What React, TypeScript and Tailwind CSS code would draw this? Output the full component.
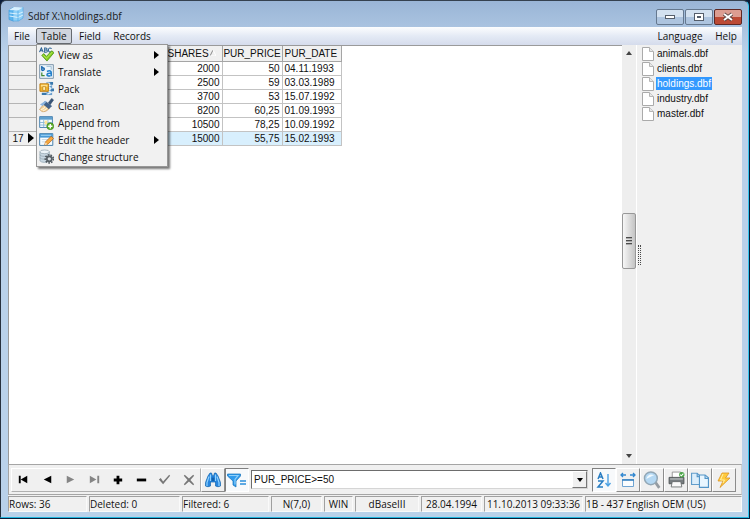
import type { ReactNode } from "react";
import clsx from "clsx";

const rows = [
  ["2000", "50", "04.11.1993"],
  ["2500", "59", "03.03.1989"],
  ["3700", "53", "15.07.1992"],
  ["8200", "60,25", "01.09.1993"],
  ["10500", "78,25", "10.09.1992"],
  ["15000", "55,75", "15.02.1993"],
];

const files = ["animals.dbf", "clients.dbf", "holdings.dbf", "industry.dbf", "master.dbf"];

const Svg = ({ className, children }: { className?: string; children: ReactNode }) => (
  <svg viewBox="0 0 16 16" className={clsx("shrink-0", className ?? "size-[15px]")} fill="none" aria-hidden="true">
    {children}
  </svg>
);

const DatabaseIcon = () => (
  <Svg className="size-4">
    <path d="M1 4l4-2.5 5 .8v11L5 15l-4-1.500z" fill="#5bb4ee" stroke="#3b97d8" strokeWidth=".6" />
    <path d="M5 4.500l5-2.200 5-1V12l-4.500 3L5 15z" fill="#8fd0f7" stroke="#4aa3e0" strokeWidth=".6" />
    <path d="M1 4l5-3 9 .5-5 3z" fill="#d9f1ff" />
    <path d="M1.500 7L10 8l5-2M1.500 10l8.500 1.500L15 9" stroke="#e3f5ff" strokeWidth=".9" />
    <path d="M10 4.500V15" stroke="#3d9ee0" strokeWidth=".6" />
  </Svg>
);

const ViewAsIcon = () => (
  <Svg>
    <path d="M.5 5.500L2.500 1l2 4.500M1.200 4h2.600M6 1v4.500h1.500c2 0 2-2.300 0-2.300H6h1.300C9 3.200 9 1 7.300 1zM13.500 1.800c-2-1.500-3.500-.5-3.500 1.400 0 2 2 3 3.500 1.500" stroke="#2d6495" strokeWidth="1.100" />
    <path d="M3 9l2-2 3 3 5.500-6L16 6l-7.500 9z" fill="#85ce20" stroke="#438b0c" strokeWidth=".8" />
    <path d="M4.500 9L8 12l6-6.500" stroke="#c6ef6e" strokeWidth=".8" />
  </Svg>
);

const TranslateIcon = () => (
  <Svg>
    <path d="M.7.700h14.600v14.600H.7z" fill="#edf5fb" stroke="#7890a6" />
    <path d="M3 2v5M3 4.500c3-1.500 4 2.500 0 2.500" stroke="#1565ae" strokeWidth="1.500" />
    <path d="M8.500 8c3-1.500 4.500-.5 4.500 1v4M13 10c-6-1-5.500 4-1 2.500" stroke="#227fcb" strokeWidth="1.700" />
    <path d="M3 9v3.500h3" stroke="#3e8931" strokeWidth="1.300" />
    <path d="M8 2.500h5V6" stroke="#97b9d1" />
  </Svg>
);

const PackIcon = () => (
  <Svg>
    <path d="M8 1h6v14H8z" fill="#6d9fcc" />
    <path d="M9 2l4 2-4 2 4 2-4 2 4 2-4 2" stroke="#e5f2fa" strokeWidth="1.500" />
    <path d="M12 1h3v3h-3zM13 8h3v3h-3zM3 12.500h5V15H3z" fill="#3978ac" />
    <path d="M1 3h9v8H1z" fill="#f1b52f" stroke="#bd7d12" />
    <path d="M2 4h7v2H2z" fill="#ffe18b" />
    <path d="M4 6h3v4H4z" fill="#fff0af" stroke="#b47715" strokeWidth=".7" />
  </Svg>
);

const CleanIcon = () => (
  <Svg>
    <path d="M10 5l3.500-4.500 2 1.500L12 7z" fill="#375478" stroke="#243b59" strokeWidth=".6" />
    <path d="M5 6l6 5c-2 3-5 4-8 3.500L.5 12C3 10 3.500 8 5 6z" fill="#f4d199" stroke="#bb8848" strokeWidth=".6" />
    <path d="M2 12.500c3-.5 4-2 5-4M4 14c3-1 4-2 5-4" stroke="#fff4d7" strokeWidth="1.100" />
    <path d="M6.500 3.500l7 5-3 3-6-5z" fill="#41638c" stroke="#2d4d74" strokeWidth=".6" />
    <path d="M1 7l6-4 1 1-4 4.500z" fill="#8db5df" />
  </Svg>
);

const AppendIcon = () => (
  <Svg>
    <path d="M.7 1.700h13.600v11.600H.7z" fill="#f3faff" stroke="#437ead" />
    <path d="M1 2h13v3H1z" fill="#5e9fce" />
    <path d="M5 5v8M9.500 5v8M1 8h13M1 10.700h13" stroke="#8cb9d8" />
    <path d="M6 6h3v4H6z" fill="#ffe496" />
    <circle cx="12" cy="12" r="3.700" fill="#5baf28" stroke="#397a16" strokeWidth=".6" />
    <path d="M12 9.700v4.600M9.700 12h4.600" stroke="#fff" strokeWidth="1.500" />
  </Svg>
);

const EditHeaderIcon = () => (
  <Svg>
    <path d="M.7 1.700h14v12.600H.7z" fill="#f6fbff" stroke="#417ba8" />
    <path d="M1 2h13.500v4H1z" fill="#4a99d5" />
    <path d="M2 3.500h11" stroke="#a9d9f7" />
    <path d="M3 8h7M3 10.500h4" stroke="#c9d8e2" />
    <path d="M6 14l1-3.500 6-6 2.500 2.500-6 6z" fill="#f7a83d" stroke="#a65817" strokeWidth=".7" />
    <path d="M6 14l1-3 2 2z" fill="#f9e1b8" />
  </Svg>
);

const StructureIcon = () => (
  <Svg>
    <path d="M1 3v9c0 3 10 3 10 0V3z" fill="#c8d7e2" stroke="#879caa" strokeWidth=".7" />
    <ellipse cx="6" cy="3" rx="5" ry="2" fill="#edf5fa" stroke="#8b9da9" strokeWidth=".7" />
    <path d="M1 6c0 2.500 10 2.500 10 0M1 9c0 2.500 10 2.500 10 0" stroke="#8b9da9" strokeWidth=".7" />
    <circle cx="11" cy="10.500" r="4.300" stroke="#4c545b" strokeWidth="1.700" strokeDasharray="1.700 1.300" />
    <circle cx="11" cy="10.500" r="2.700" fill="#d9dfe3" stroke="#555e65" strokeWidth="1.800" />
  </Svg>
);

const menuItems = [
  { label: "View as", icon: <ViewAsIcon />, sub: true },
  { label: "Translate", icon: <TranslateIcon />, sub: true },
  { label: "Pack", icon: <PackIcon /> },
  { label: "Clean", icon: <CleanIcon /> },
  { label: "Append from", icon: <AppendIcon /> },
  { label: "Edit the header", icon: <EditHeaderIcon />, sub: true },
  { label: "Change structure", icon: <StructureIcon /> },
];

const navButtons = [
  { label: "First", path: "M3 4h2v8H3zM12 4v8L5 8z", color: "fill-black" },
  { label: "Previous", path: "M12 4v8L4 8z", color: "fill-black" },
  { label: "Next", path: "M4 4v8l8-4z", color: "fill-[#858585]" },
  { label: "Last", path: "M3 4v8l7-4zM11 4h2v8h-2z", color: "fill-[#858585]" },
  { label: "Insert", path: "M7 4h3v3h3v3h-3v3H7v-3H4V7h3z", color: "fill-black" },
  { label: "Delete", path: "M3 7h10v3H3z", color: "fill-black" },
  { label: "Post", path: "M2 8l2-1.500L6.500 10 13 3l1 1-7.500 9z", color: "fill-[#777777]" },
  { label: "Cancel", path: "M3 4l1-1 4.500 4L13 3l1 1-4 4.500L14 13l-1 1-4.500-4L4 14l-1-1 4-4.500z", color: "fill-[#777777]" },
];

const BinocularsIcon = () => (
  <Svg className="size-4">
    <path d="M3 4l2-3h1.500l1 3h1l1-3H11l2 3 2.500 6.500V14q-2.500 1.500-5 0v-4h-5v4Q3 15.500.5 14v-3.500z" fill="#2685df" stroke="#1265ad" strokeWidth=".7" />
    <path d="M4 4.500L2 10.500V14M12 4.500l2 6V14M5.500 2.500V9M10.500 2.500V9" stroke="#8fd2ff" strokeWidth="1.200" />
    <path d="M6.500 5.500h3v3.500h-3z" fill="#1262b0" />
  </Svg>
);

const FilterIcon = () => (
  <svg viewBox="0 0 20 16" className="h-4 w-5 shrink-0" fill="none" aria-hidden="true">
    <path d="M.5 2h13v2L9 9v6l-3-2V9L.5 4z" fill="#319bec" stroke="#1672bb" strokeWidth=".7" />
    <path d="M2 3.500h9L8 7.500v5" stroke="#8ed0fb" strokeWidth="1.200" />
    <path d="M13 9h6M13 12h6" stroke="#2b8edc" strokeWidth="1.700" />
  </svg>
);

const SortIcon = () => (
  <Svg className="size-4">
    <path d="M2 7l2.500-6L7 7M3 5h3M2 9h5l-5 6h5" stroke="#297dc2" strokeWidth="1.500" />
    <path d="M12 2v11M9.500 11l2.500 3 2.500-3" stroke="#4da2e3" strokeWidth="1.400" />
  </Svg>
);

const WidthIcon = () => (
  <Svg className="size-4">
    <path d="M1 3h5M3 1L1 3l2 2M10 3h5M13 1l2 2-2 2" stroke="#3187d0" strokeWidth="1.300" />
    <path d="M2.500 7.500h11v7h-11z" fill="#fbfdff" stroke="#70a5d3" />
    <path d="M2 8h12" stroke="#3f87c3" strokeWidth="1.700" />
  </Svg>
);

const SearchIcon = () => (
  <Svg className="size-[18px]">
    <path d="M11 10l3.500 5" stroke="#959ca2" strokeWidth="2.500" />
    <circle cx="7" cy="6.500" r="5.700" fill="#b4d8f3" stroke="#92a7b5" strokeWidth="1.300" />
    <path d="M3 7c1-4 4-5 7-3-2 0-4 2-7 3z" fill="#f0faff" />
  </Svg>
);

const PrintIcon = () => (
  <Svg className="size-[17px]">
    <path d="M4 1h8v6H4z" fill="#fff" stroke="#8a8a8a" strokeWidth=".8" />
    <path d="M1 6h14v6H1z" fill="#777d80" stroke="#4b5052" strokeWidth=".8" />
    <path d="M2 7.500h12" stroke="#c5caca" />
    <path d="M4 10h8l1 5H3z" fill="#fafafa" stroke="#676b6d" strokeWidth=".8" />
    <circle cx="13" cy="3.500" r="2.500" fill="#48a446" />
    <path d="M11.500 3.500l1 1 2-2" stroke="#fff" />
  </Svg>
);

const CopyIcon = () => (
  <Svg className="size-[18px]">
    <path d="M.5 2h5L8 4.500V12H.5z" fill="#dceefb" stroke="#629dcb" />
    <path d="M7.500 3.500h5L15.500 6v8.500h-8z" fill="#e9f6ff" stroke="#5495c7" />
    <path d="M12.500 3.500V6.500h3M5.500 2v3H7" stroke="#5495c7" />
  </Svg>
);

const BoltIcon = () => (
  <Svg className="size-4">
    <path d="M6 1h7L9.500 6H14L4 15.500 7 9H2z" fill="#ffcb3d" stroke="#dc9422" strokeWidth=".8" />
    <path d="M7 2L4.500 8h4L7 11" stroke="#fff1a5" />
  </Svg>
);

const statusPanels = [
  { text: "Rows: 36", className: "w-[79px]" },
  { text: "Deleted: 0", className: "w-[91px]" },
  { text: "Filtered: 6", className: "w-[87px]" },
  { text: "N(7,0)", className: "w-[51px] text-center" },
  { text: "WIN", className: "w-[29px] text-center" },
  { text: "dBaseIII", className: "w-16 text-center" },
  { text: "28.04.1994", className: "w-[61px] text-center" },
  { text: "11.10.2013 09:33:36", className: "w-[99px] text-center" },
  { text: "1B - 437 English OEM (US)", className: "flex-1" },
];

const ToolButton = ({ label, pressed, children }: { label: string; pressed?: boolean; children: ReactNode }) => (
  <button
    type="button"
    aria-label={label}
    aria-pressed={pressed}
    className={clsx(
      "flex h-6 w-6 shrink-0 items-center justify-center border",
      pressed
        ? "border-t-[#808080] border-l-[#808080] border-r-white border-b-white bg-[#f7f9fb]"
        : "border-t-white border-l-white border-r-[#8c8c8c] border-b-[#8c8c8c] bg-[#f0f0f0]",
    )}
  >
    {children}
  </button>
);

const TitleBar = () => (
  <header className="flex h-[26px] shrink-0 items-center gap-1">
    <DatabaseIcon />
    <h1 className="flex-1 pt-1 text-[10px] leading-4 text-[#1b1b1b]">Sdbf X:\holdings.dbf</h1>
    <div className="flex gap-px pt-1.5">
      <button type="button" aria-label="Minimize" className="flex h-4 w-7 items-center justify-center rounded-xs border border-[#65788f] bg-linear-to-b from-[#d3e1f0] from-50% to-[#adc4df] to-50%">
        <span className="h-1 w-2.5 border border-[#555e6b] bg-white" />
      </button>
      <button type="button" aria-label="Maximize" className="flex h-4 w-7 items-center justify-center rounded-xs border border-[#65788f] bg-linear-to-b from-[#d3e1f0] from-50% to-[#adc4df] to-50%">
        <span className="flex h-2 w-2.5 items-center justify-center border border-[#555e6b] bg-white">
          <span className="h-0.5 w-1 bg-[#555e6b]" />
        </span>
      </button>
      <button type="button" aria-label="Close" className="flex h-4 w-7 items-center justify-center rounded-xs border border-[#5e2824] bg-linear-to-b from-[#dc9d91] from-50% to-[#bc4a35] to-50%">
        <svg viewBox="0 0 12 10" className="h-2.5 w-3" aria-hidden="true">
          <path d="M2 2l8 6M10 2L2 8" stroke="#55413f" strokeWidth="3.500" />
          <path d="M2 2l8 6M10 2L2 8" stroke="#ffffff" strokeWidth="2" />
        </svg>
      </button>
    </div>
  </header>
);

const TableMenu = () => (
  <div role="menu" className="absolute top-full left-0 z-10 w-[132px] border border-[#979797] bg-[#f1f1f1] py-px shadow-[2px_2px_2px_#00000088]">
    {menuItems.map((item) => (
      <button key={item.label} type="button" role="menuitem" className="flex h-[17px] w-full items-center gap-1 pr-2 pl-0.5 text-left">
        {item.icon}
        <span className="flex-1 whitespace-nowrap">{item.label}</span>
        {item.sub && (
          <svg viewBox="0 0 5 8" className="h-2 w-[5px]" aria-hidden="true">
            <path d="M0 0l5 4-5 4z" fill="#000" />
          </svg>
        )}
      </button>
    ))}
  </div>
);

const MenuBar = () => (
  <nav className="flex h-[18px] shrink-0 items-center bg-linear-to-b from-[#fcfdfe] via-[#e4eaf5] to-[#d5dcec] text-[10px] leading-4">
    <button type="button" className="w-7 text-center">File</button>
    <div className="relative">
      <button type="button" aria-haspopup="menu" aria-expanded="true" className="h-4 w-9 rounded-xs border border-[#666a70] bg-[#cfd4dd] leading-[14px]">
        Table
      </button>
      <TableMenu />
    </div>
    <button type="button" className="w-9 text-center">Field</button>
    <button type="button" className="w-12 text-center">Records</button>
    <span className="flex-1" />
    <button type="button" className="w-15 text-center">Language</button>
    <button type="button" className="w-8 text-center">Help</button>
  </nav>
);

const Grid = () => (
  <div className="min-w-0 flex-1 overflow-hidden border-t border-l border-[#9a9a9a] bg-white">
    <table className="w-[332px] table-fixed border-collapse text-[10px] leading-[13px]">
      <colgroup>
        <col className="w-[27px]" />
        <col className="w-[130px]" />
        <col className="w-[56px]" />
        <col className="w-[60px]" />
        <col className="w-[59px]" />
      </colgroup>
      <thead>
        <tr className="h-[15px] bg-[#f0f0f0]">
          <th className="border-r border-b border-[#a5a5a5]" />
          <th className="border-r border-b border-[#a5a5a5]" />
          <th className="border-r border-b border-[#a5a5a5] p-0 font-normal">
            <span className="flex items-center justify-between pr-1.5 pl-px">
              SHARES
              <svg viewBox="0 0 6 6" className="size-1.5" fill="none" aria-hidden="true">
                <path d="M0 6l3-6" stroke="#888" />
                <path d="M3 0l3 6H0" stroke="#fff" />
              </svg>
            </span>
          </th>
          <th className="border-r border-b border-[#a5a5a5] p-0 font-normal">PUR_PRICE</th>
          <th className="border-r border-b border-[#a5a5a5] p-0 pl-0.5 text-left font-normal">PUR_DATE</th>
        </tr>
      </thead>
      <tbody>
        {rows.map((row, i) => {
          const current = i === rows.length - 1;
          return (
            <tr key={row[2]} className={clsx("h-[14px]", current && "bg-[#d8effd]")}>
              <th className="border-r border-b border-[#b5b5b5] bg-[#f0f0f0] p-0 font-normal">
                {current && (
                  <span className="flex items-center justify-end gap-1 pr-0.5">
                    17
                    <svg viewBox="0 0 6 10" className="h-2.5 w-1.5" aria-hidden="true">
                      <path d="M0 0l6 5-6 5z" fill="#000" />
                    </svg>
                  </span>
                )}
              </th>
              <td className="border-r border-b border-[#c3c3c3]" />
              <td className="border-r border-b border-[#c3c3c3] p-0 pr-0.5 text-right">{row[0]}</td>
              <td className="border-r border-b border-[#c3c3c3] p-0 pr-0.5 text-right">{row[1]}</td>
              <td className="border-r border-b border-[#c3c3c3] p-0 pl-0.5">{row[2]}</td>
            </tr>
          );
        })}
      </tbody>
    </table>
  </div>
);

const ScrollBar = () => (
  <div className="flex w-[14px] shrink-0 flex-col items-center bg-[#eeeeee] py-1.5">
    <svg viewBox="0 0 6 4" className="h-1 w-1.5" aria-hidden="true">
      <path d="M0 4l3-4 3 4z" fill="#444" />
    </svg>
    <div className="grow-[155]" />
    <div className="flex h-14 w-[14px] flex-col items-center justify-center gap-px rounded-xs border border-[#989898] bg-linear-to-r from-[#f7f7f7] to-[#c4c4c4]">
      <span className="h-0.5 w-1.5 border-t border-[#4c4c4c] bg-[#aaaaaa]" />
      <span className="h-0.5 w-1.5 border-t border-[#4c4c4c] bg-[#aaaaaa]" />
      <span className="h-0.5 w-1.5 border-t border-[#4c4c4c] bg-[#aaaaaa]" />
    </div>
    <div className="grow-[182]" />
    <svg viewBox="0 0 6 4" className="h-1 w-1.5" aria-hidden="true">
      <path d="M0 0l3 4 3-4z" fill="#444" />
    </svg>
  </div>
);

const FileList = () => (
  <aside className="flex w-[106px] shrink-0 border-l border-white bg-[#f0f0f0]">
    <div className="flex w-1 shrink-0 items-center justify-center">
      <span className="h-5 w-[3px] border-x border-dotted border-[#4a4a4a]" />
    </div>
    <ul className="pt-px pl-px text-[10px] leading-[13px]">
      {files.map((name) => (
        <li key={name} className="h-[15px]">
          <button type="button" className="flex h-full items-center gap-0.5">
            <svg viewBox="0 0 12 14" className="h-3.5 w-3" aria-hidden="true">
              <path d="M.5.500h7l4 4v9H.5z" fill="#fff" stroke="#aaa" />
              <path d="M7.500.500v4h4" fill="#e7e7e7" stroke="#b5b5b5" />
            </svg>
            <span className={clsx("px-px", name === "holdings.dbf" && "bg-[#3399ff] text-white")}>{name}</span>
          </button>
        </li>
      ))}
    </ul>
  </aside>
);

const Toolbar = () => (
  <div className="flex h-[31px] shrink-0 items-center border border-[#a5a5a5] border-r-[#d0d0d0] bg-[#f0f0f0] pr-[5px] pl-0.5">
    <div className="flex h-6 w-[190px] shrink-0 border border-t-white border-r-[#b0b0b0] border-b-[#b0b0b0] border-l-white">
      {navButtons.map((b) => (
        <button key={b.label} type="button" aria-label={b.label} className="flex flex-1 items-center justify-center">
          <Svg className="size-[15px]">
            <path d={b.path} className={b.color} />
          </Svg>
        </button>
      ))}
    </div>
    <ToolButton label="Find"><BinocularsIcon /></ToolButton>
    <ToolButton label="Filter" pressed><FilterIcon /></ToolButton>
    <div className="ml-0.5 flex h-[19px] min-w-0 flex-1 border border-t-[#6d6d6d] border-r-[#d5d5d5] border-b-[#d5d5d5] border-l-[#6d6d6d] bg-white">
      <input aria-label="Filter expression" defaultValue="PUR_PRICE>=50" className="min-w-0 flex-1 px-0.5 text-[10px] outline-none" />
      <button type="button" aria-label="Show filters" className="flex w-[15px] items-center justify-center border border-t-white border-r-[#777777] border-b-[#777777] border-l-white bg-[#f0f0f0]">
        <svg viewBox="0 0 6 4" className="h-1 w-1.5" aria-hidden="true">
          <path d="M0 0h6L3 4z" fill="#000" />
        </svg>
      </button>
    </div>
    <div className="ml-1 flex">
      <ToolButton label="Sort" pressed><SortIcon /></ToolButton>
      <ToolButton label="Fit columns"><WidthIcon /></ToolButton>
      <ToolButton label="Preview"><SearchIcon /></ToolButton>
      <ToolButton label="Print"><PrintIcon /></ToolButton>
      <ToolButton label="Copy"><CopyIcon /></ToolButton>
      <ToolButton label="Run"><BoltIcon /></ToolButton>
    </div>
  </div>
);

const StatusBar = () => (
  <footer className="flex h-[17px] shrink-0 gap-0.5 bg-[#f0f0f0] pt-px font-['Open_Sans',sans-serif] text-[10px] leading-[14px]">
    {statusPanels.map((p) => (
      <div key={p.text} className={clsx("overflow-hidden border border-t-[#a0a0a0] border-r-[#fafafa] border-b-[#fafafa] border-l-[#a0a0a0] whitespace-nowrap", p.className)}>
        {p.text}
      </div>
    ))}
  </footer>
);

export default function App() {
  return (
    <div className="h-screen bg-[#0b1b38] pr-px pb-px font-['Liberation_Sans',Arial,sans-serif] text-[#101010]">
      <div className="flex h-full flex-col rounded-t-md border border-t-[#35414f] border-r-[#36c5ee] border-b-[#20b6e0] border-l-[#26303d] bg-linear-to-b from-[#9ab5d6] via-[#b9d1ea] via-10% to-[#b9d1ea] pr-1.5 pb-[5px] pl-[7px]">
        <div className="flex min-h-0 flex-1 flex-col font-['Open_Sans',sans-serif]">
          <TitleBar />
          <MenuBar />
          <div className="flex min-h-0 flex-1 flex-col font-['Liberation_Sans',Arial,sans-serif]">
            <main className="flex min-h-0 flex-1 bg-[#f0f0f0]">
              <Grid />
              <ScrollBar />
              <FileList />
            </main>
            <Toolbar />
            <StatusBar />
          </div>
        </div>
      </div>
    </div>
  );
}
